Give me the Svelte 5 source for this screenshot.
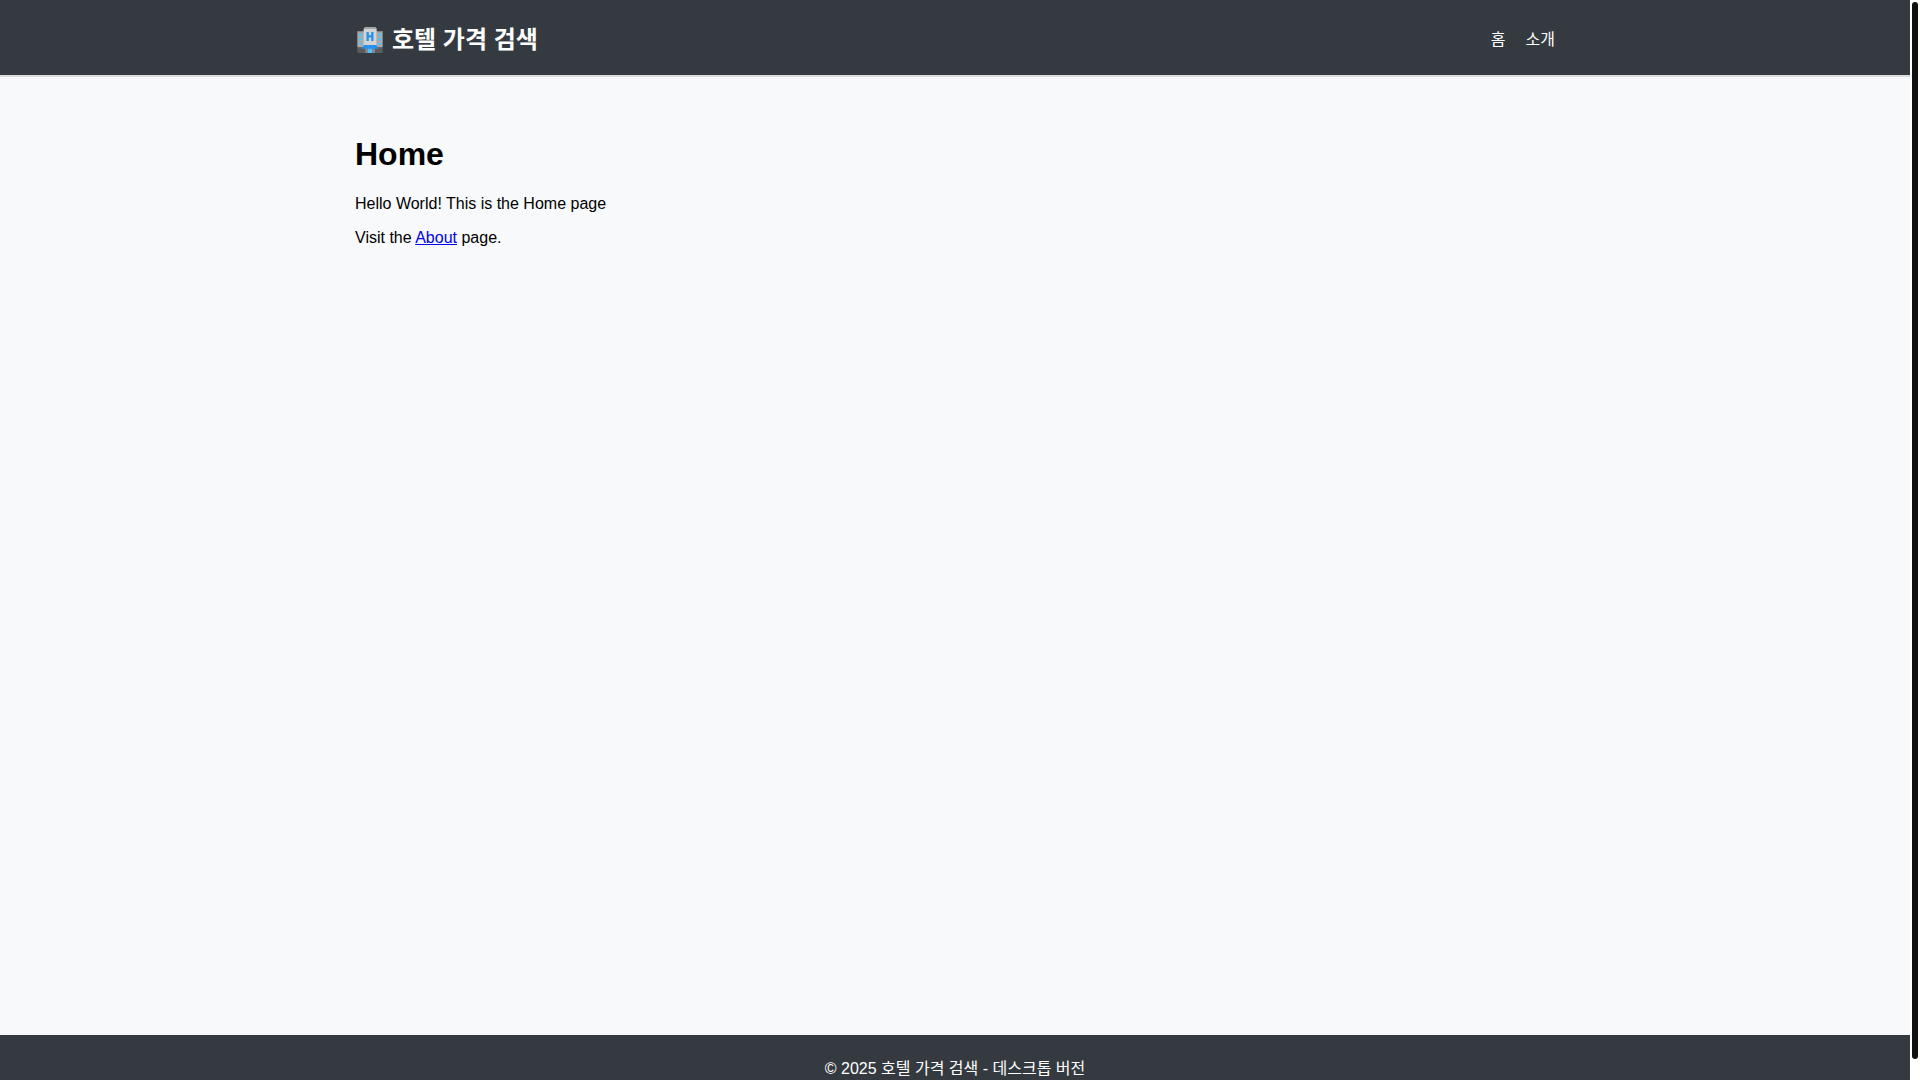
<script>
  const title = '호텔 가격 검색';
  const links = [
    { href: '/', label: '홈' },
    { href: '/about', label: '소개' },
  ];
</script>

<div class="window">
  <div class="page">
    <header>
      <div class="container bar">
        <div class="brand">
          <svg viewBox="15 12 90 93" aria-hidden="true">
            <rect x="22" y="82" width="76" height="17" rx="2" fill="#5b5d60" />
            <path d="M22 34h20v48H22zM79 34h19v48H79z" fill="#a9aaab" />
            <path d="M22 33h20v4H22zM79 33h19v4H79z" fill="#858789" />
            <path d="M41 26l5-5h29l5 5v52H41z" fill="#d2d3d4" />
            <path d="M41 27l5-6h29l5 6z" fill="#a3a4a6" />
            <path
              d="M27 41h10v6H27zM27 54h10v7H27zM27 68h10v6H27zM84 41h10v6H84zM84 54h10v7H84zM84 68h10v6H84z"
              fill="#4fc3f7"
            />
            <path d="M53 36v27M67 36v27M53 49h14" fill="none" stroke="#2a8fea" stroke-width="7" />
            <rect x="46" y="84" width="29" height="15" fill="#85878a" />
            <rect x="54" y="84" width="12" height="15" fill="#4fc3f7" />
            <path d="M42 75h37l6 11H35z" fill="#2a8fea" />
          </svg>
          <span>{title}</span>
        </div>
        <nav>
          {#each links as link}
            <a href={link.href}>{link.label}</a>
          {/each}
        </nav>
      </div>
    </header>

    <main class="container">
      <h1>Home</h1>
      <p>Hello World! This is the Home page</p>
      <p>Visit the <a href="/about">About</a> page.</p>
    </main>

    <footer>© 2025 {title} - 데스크톱 버전</footer>
  </div>

  <div class="track" aria-hidden="true"><div class="thumb"></div></div>
</div>

<style>
  :global(body) {
    margin: 0;
    background: #f8f9fa;
  }

  .window {
    display: flex;
    height: 100vh;
    overflow: hidden;
    font-family: 'Liberation Sans', 'Noto Sans CJK KR', sans-serif;
    font-size: 16px;
    color: #000;
    background: #f8f9fa;
  }

  .page {
    flex: 1;
    min-width: 0;
    overflow: hidden;
  }

  .container {
    box-sizing: border-box;
    max-width: 1200px;
    margin: 0 auto;
  }

  header {
    background: #343a40;
    border-bottom: 2px solid #ddd;
  }

  .bar {
    display: flex;
    align-items: center;
    justify-content: space-between;
    padding: 18px 0;
  }

  .brand {
    display: flex;
    align-items: center;
    gap: 7px;
    padding-top: 4px;
    font-size: 24px;
    line-height: 35px;
    font-weight: bold;
    color: #fff;
  }

  .brand svg {
    width: 30px;
    height: 31px;
  }

  nav {
    display: flex;
    gap: 20px;
  }

  nav a {
    color: #fff;
    text-decoration: none;
  }

  main {
    min-height: calc(100vh - 122px);
    padding: 59px 0 20px;
  }

  h1 {
    margin: 0 0 22px;
    font-size: 32px;
    line-height: 37px;
  }

  p {
    margin: 0 0 16px;
    line-height: 18px;
  }

  p a {
    color: #0000ee;
  }

  footer {
    padding: 22px 20px;
    line-height: 24px;
    text-align: center;
    color: #fff;
    background: #343a40;
  }

  .track {
    box-sizing: border-box;
    flex: 0 0 10px;
    height: 100vh;
    padding: 2px;
    background: #fff;
  }

  .thumb {
    height: calc(100% - 19px);
    border-radius: 3px;
    background: #111;
  }
</style>
